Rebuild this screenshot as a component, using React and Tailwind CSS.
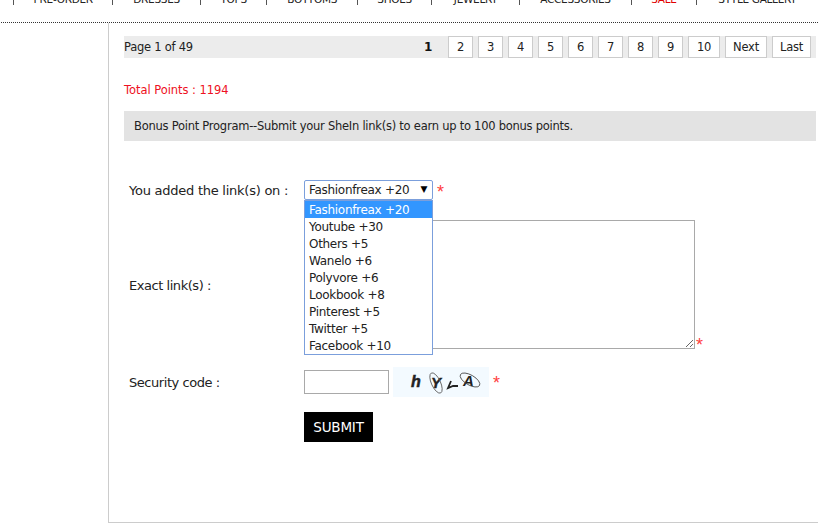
const NAV = [
  ["PRE-ORDER", 100],
  ["DRESSES", 88],
  ["TOPS", 67],
  ["BOTTOMS", 91],
  ["SHOES", 75],
  ["JEWELRY", 88],
  ["ACCESSORIES", 113],
  ["SALE", 65],
  ["STYLE GALLERY", 123],
];
const PAGES = [
  ["2", "w-[25px]"],
  ["3", "w-[25px]"],
  ["4", "w-[25px]"],
  ["5", "w-[25px]"],
  ["6", "w-[25px]"],
  ["7", "w-[25px]"],
  ["8", "w-[25px]"],
  ["9", "w-[25px]"],
  ["10", "w-[32px]"],
  ["Next", "w-[42px]"],
  ["Last", "w-[39px]"],
];
const OPTIONS = [
  "Fashionfreax +20",
  "Youtube +30",
  "Others +5",
  "Wanelo +6",
  "Polyvore +6",
  "Lookbook +8",
  "Pinterest +5",
  "Twitter +5",
  "Facebook +10",
];

function Star({ className = "" }) {
  return (
    <span className={`text-[#ff4040] text-[18px] leading-none font-['Liberation_Sans',sans-serif] tracking-normal ${className}`}>*</span>
  );
}

function Captcha() {
  return (
    <svg width="96" height="30" viewBox="0 0 96 30" className="block bg-[#f3faff]">
      <g fontFamily="'Liberation Sans', sans-serif" fontWeight="700" fontStyle="italic" fill="#222">
        <text x="18" y="20" fontSize="16" stroke="#222" strokeWidth="0.5">h</text>
        <text x="38" y="21" fontSize="15" stroke="#222" strokeWidth="0.4">Y</text>
        <text x="70" y="19" fontSize="15">A</text>
      </g>
      <path d="M58 14 L55 21 L60 19 L65 19" fill="none" stroke="#222" strokeWidth="1.8" />
      <ellipse cx="43" cy="16" rx="4.5" ry="11" transform="rotate(-25 43 16)" fill="none" stroke="#555" strokeWidth="0.8" />
      <ellipse cx="77" cy="13" rx="11" ry="5" transform="rotate(30 77 13)" fill="none" stroke="#444" strokeWidth="0.8" />
    </svg>
  );
}

export default function App() {
  return (
    <div className="w-[819px] h-[529px] overflow-hidden bg-white text-[#222] text-[11.5px] tracking-[-0.25px] font-['DejaVu_Sans',Verdana,sans-serif]">
      <nav className="h-[23px] border-b border-dotted border-[#333] ml-px mr-px overflow-hidden">
        <ul className="flex -mt-[9px] pl-[12px] h-[14px] items-end leading-[14px] text-[10.5px] tracking-[-0.3px]">
          {NAV.map(([label, w]) => (
            <li
              key={label}
              className="flex items-center justify-center border-l border-[#555] h-[12px] whitespace-nowrap"
              style={{ width: w }}
            >
              <span className={label === "SALE" ? "text-[#e00000]" : "text-[#222]"}>{label}</span>
            </li>
          ))}
        </ul>
      </nav>

      <main className="ml-[108px] mr-px h-[500px] border-l border-b border-[#cccccc] pl-[15px] pr-[2px] pt-[13px]">
        <div className="flex items-center h-[22px] bg-[#ececec]">
          <span className="pt-[1px] text-[#222]">Page 1 of 49</span>
          <div className="ml-auto mr-[5px] flex items-center gap-[5px]">
            <b className="mr-[11px] text-[12px] text-[#111]">1</b>
            {PAGES.map(([p, w]) => (
              <a key={p} className={`${w} h-[22px] pt-[1px] flex items-center justify-center bg-white border border-[#cccccc] text-[#222]`}>
                {p}
              </a>
            ))}
          </div>
        </div>

        <p className="mt-[25px] h-[14px] leading-[14px] text-[#ee1122] tracking-[-0.05px]">Total Points : 1194</p>

        <div className="mt-[14px] h-[30px] pt-[1px] flex items-center pl-[10px] bg-[#e3e3e3] text-[#222]">
          Bonus Point Program--Submit your SheIn link(s) to earn up to 100 bonus points.
        </div>

        <form className="mt-[39px] pl-[5px] text-[13px] tracking-[-0.45px]">
          <div className="flex items-center h-[20px]">
            <label className="w-[175px] pt-[1px] tracking-[-0.25px]">You added the link(s) on :</label>
            <div className="relative w-[129px] text-[12px] tracking-[-0.3px]">
              <div className="h-[20px] flex items-center justify-between pl-[4px] pr-[5px] bg-white border border-[#7b9fdc] rounded-[2px]">
                <span>Fashionfreax +20</span>
                <span className="text-[9px] text-black">▼</span>
              </div>
              <ul className="absolute left-0 top-[20px] z-10 w-[129px] h-[155px] bg-white border border-[#7b9fdc]">
                {OPTIONS.map((o, i) => (
                  <li
                    key={o}
                    className={`h-[17px] leading-[19px] pl-[4px] ${i === 0 ? "bg-[#3296ff] text-white" : "text-[#222]"}`}
                  >
                    {o}
                  </li>
                ))}
              </ul>
            </div>
            <Star className="ml-[4px] h-[15px]" />
          </div>

          <div className="mt-[20px] flex items-center">
            <label className="w-[175px] pt-[3px]">Exact link(s) :</label>
            <div className="flex items-end">
              <textarea className="block w-[391px] h-[129px] border border-[#a9a9a9] bg-white" />
              <Star className="ml-[1px] h-[13px]" />
            </div>
          </div>

          <div className="mt-[18px] flex items-center h-[30px]">
            <label className="w-[175px] pt-[1px]">Security code :</label>
            <input className="w-[85px] h-[24px] border border-[#a9a9a9] bg-white" />
            <div className="ml-[4px]">
              <Captcha />
            </div>
            <Star className="ml-[4px] h-[15px] -mt-[2px]" />
          </div>

          <button
            type="button"
            className="mt-[15px] ml-[175px] block w-[69px] h-[30px] bg-black text-white text-[13.5px] tracking-[-0.2px] font-medium"
          >
            SUBMIT
          </button>
        </form>
      </main>
    </div>
  );
}
